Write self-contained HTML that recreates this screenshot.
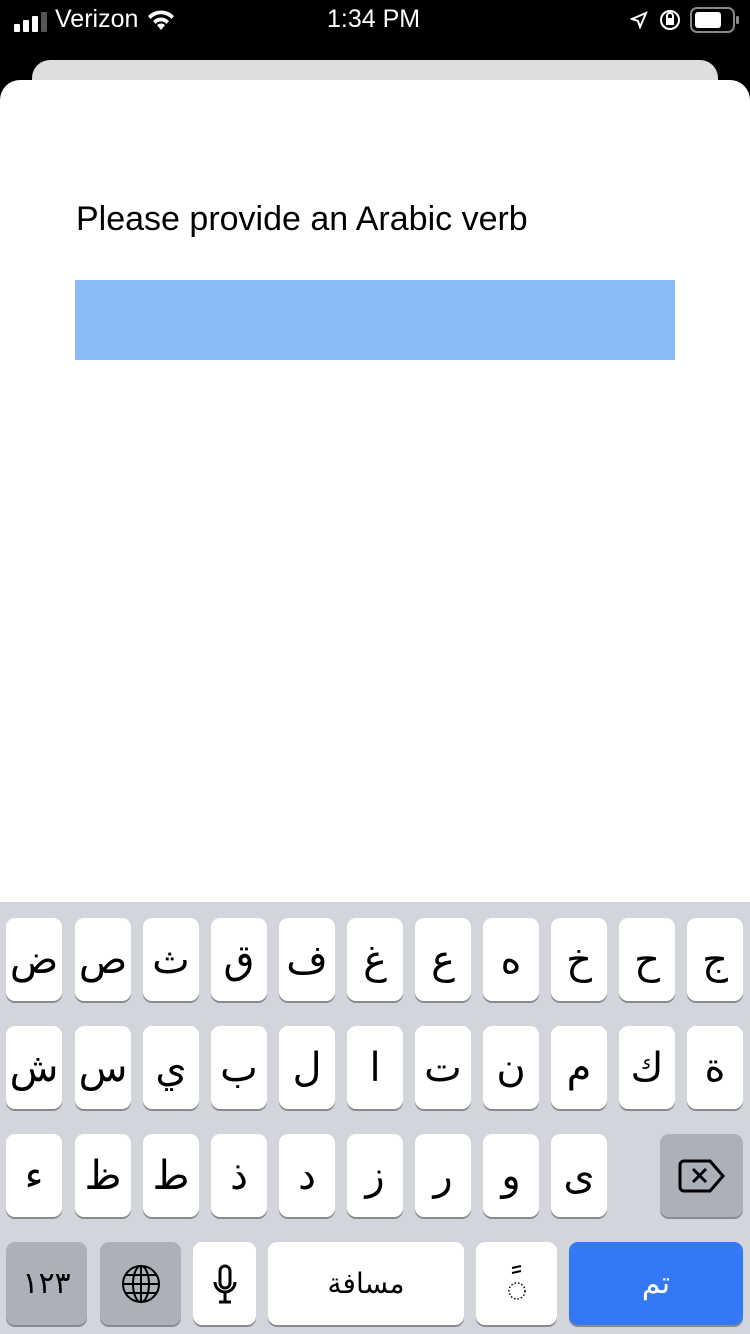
<!DOCTYPE html>
<html><head><meta charset="utf-8"><style>
*{margin:0;padding:0;box-sizing:border-box}
body{width:750px;height:1334px;background:#000;position:relative;overflow:hidden;font-family:"Liberation Sans","Noto Sans CJK SC",sans-serif}
.sb{position:absolute;color:#fff;font-size:25px;top:5px}
.back{position:absolute;left:32px;top:60px;width:686px;height:40px;background:#dedede;border-radius:18px 18px 0 0}
.sheet{position:absolute;left:0;top:80px;width:750px;height:830px;background:#fff;border-radius:20px 20px 0 0}
.kb{position:absolute;left:0;top:902px;width:750px;height:432px;background:#d2d5db}
.k{position:absolute;height:83px;background:#fff;border-radius:9px;box-shadow:0 2px 0 #898a8d;display:flex;align-items:center;justify-content:center;font-size:40px;color:#000;font-family:"DejaVu Sans",sans-serif}
.g{background:#acb0b9}
</style></head><body>
<div class="sb" style="left:14px;top:10px"><svg width="36" height="20"><rect x="0" y="12" width="6" height="8" rx="1" fill="#fff"/><rect x="9" y="8" width="6" height="12" rx="1" fill="#fff"/><rect x="18" y="4" width="6" height="16" rx="1" fill="#fff"/><rect x="27" y="0" width="6" height="20" rx="1" fill="#555"/></svg></div>
<div class="sb" style="left:55px">Verizon</div>
<svg style="position:absolute;left:146px;top:9px" width="30" height="22" viewBox="0 0 30 22"><path d="M15 21L11 16a6 6 0 0 1 8 0z M7 12a11 11 0 0 1 16 0l-2.5 3a7 7 0 0 0-11 0z M2 7a18 18 0 0 1 26 0l-2.5 3a14 14 0 0 0-21 0z" fill="#fff"/></svg>
<div class="sb" style="left:327px">1:34 PM</div>
<svg style="position:absolute;left:630px;top:11px" width="18" height="18"><path d="M16 2L2 8l6 2 2 6z" fill="none" stroke="#fff" stroke-width="2"/></svg>
<svg style="position:absolute;left:659px;top:9px" width="24" height="22"><circle cx="11" cy="11" r="9" fill="none" stroke="#fff" stroke-width="2"/><rect x="7" y="9" width="8" height="7" fill="#fff"/><path d="M8 9V7a3 3 0 0 1 6 0v2" stroke="#fff" fill="none" stroke-width="2"/></svg>
<svg style="position:absolute;left:690px;top:7px" width="50" height="26"><rect x="1" y="1" width="43" height="24" rx="6" fill="none" stroke="#888" stroke-width="2"/><rect x="5" y="5" width="26" height="16" rx="3" fill="#fff"/><rect x="46" y="9" width="3" height="8" rx="1" fill="#888"/></svg>
<div class="back"></div>
<div class="sheet">
<div style="position:absolute;left:76px;top:120px;font-size:34px;color:#000">Please provide an Arabic verb</div>
<div style="position:absolute;left:75px;top:200px;width:600px;height:80px;background:#8bbcf8"></div>
</div>
<div class="kb"></div>
<div class="k" style="left:6px;top:918px;width:56px">ض</div>
<div class="k" style="left:75px;top:918px;width:56px">ص</div>
<div class="k" style="left:143px;top:918px;width:56px">ث</div>
<div class="k" style="left:211px;top:918px;width:56px">ق</div>
<div class="k" style="left:279px;top:918px;width:56px">ف</div>
<div class="k" style="left:347px;top:918px;width:56px">غ</div>
<div class="k" style="left:415px;top:918px;width:56px">ع</div>
<div class="k" style="left:483px;top:918px;width:56px">ه</div>
<div class="k" style="left:551px;top:918px;width:56px">خ</div>
<div class="k" style="left:619px;top:918px;width:56px">ح</div>
<div class="k" style="left:687px;top:918px;width:56px">ج</div>
<div class="k" style="left:6px;top:1026px;width:56px">ش</div>
<div class="k" style="left:75px;top:1026px;width:56px">س</div>
<div class="k" style="left:143px;top:1026px;width:56px">ي</div>
<div class="k" style="left:211px;top:1026px;width:56px">ب</div>
<div class="k" style="left:279px;top:1026px;width:56px">ل</div>
<div class="k" style="left:347px;top:1026px;width:56px">ا</div>
<div class="k" style="left:415px;top:1026px;width:56px">ت</div>
<div class="k" style="left:483px;top:1026px;width:56px">ن</div>
<div class="k" style="left:551px;top:1026px;width:56px">م</div>
<div class="k" style="left:619px;top:1026px;width:56px">ك</div>
<div class="k" style="left:687px;top:1026px;width:56px">ة</div>
<div class="k" style="left:6px;top:1134px;width:56px">ء</div>
<div class="k" style="left:75px;top:1134px;width:56px">ظ</div>
<div class="k" style="left:143px;top:1134px;width:56px">ط</div>
<div class="k" style="left:211px;top:1134px;width:56px">ذ</div>
<div class="k" style="left:279px;top:1134px;width:56px">د</div>
<div class="k" style="left:347px;top:1134px;width:56px">ز</div>
<div class="k" style="left:415px;top:1134px;width:56px">ر</div>
<div class="k" style="left:483px;top:1134px;width:56px">و</div>
<div class="k" style="left:551px;top:1134px;width:56px">ى</div>
<div class="k g" style="left:660px;top:1134px;width:83px"><svg width="48" height="34" viewBox="0 0 48 34"><path d="M6 2h26l13 15-13 15H6a4 4 0 0 1-4-4V6a4 4 0 0 1 4-4z" fill="none" stroke="#000" stroke-width="3"/><path d="M15 10l13 13M28 10L15 23" stroke="#000" stroke-width="3"/></svg></div>
<div class="k g" style="left:6px;top:1242px;width:81px;font-size:30px">١٢٣</div>
<div class="k g" style="left:100px;top:1242px;width:81px"><svg width="40" height="40" viewBox="0 0 40 40" fill="none" stroke="#000" stroke-width="2"><circle cx="20" cy="20" r="18"/><ellipse cx="20" cy="20" rx="8" ry="18"/><path d="M20 2v36M2 20h36M5 11h30M5 29h30"/></svg></div>
<div class="k" style="left:193px;top:1242px;width:63px"><svg width="26" height="40" viewBox="0 0 26 40" fill="none" stroke="#000" stroke-width="3"><rect x="8" y="2" width="10" height="22" rx="5"/><path d="M3 18a10 10 0 0 0 20 0M13 28v9M7 38h12"/></svg></div>
<div class="k" style="left:268px;top:1242px;width:196px;font-size:28px">مسافة</div>
<div class="k" style="left:476px;top:1242px;width:81px"><svg width="20" height="40" viewBox="0 0 20 40"><path d="M5 4l9-2M5 9l9-2" stroke="#000" stroke-width="2"/><circle cx="10" cy="27" r="8" fill="none" stroke="#000" stroke-width="1.5" stroke-dasharray="1.5 2"/></svg></div>
<div class="k" style="left:569px;top:1242px;width:174px;background:#3478f6;color:#fff;font-size:30px">تم</div>
</body></html>
